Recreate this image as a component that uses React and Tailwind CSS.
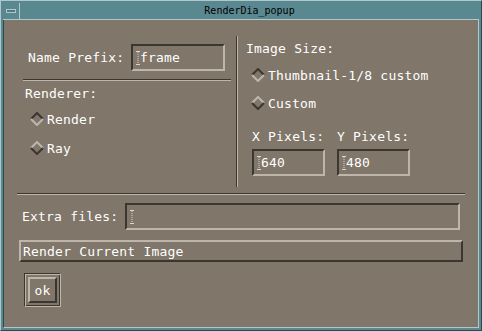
import React from 'react';

// Motif-style shadow colours
const DARK = '#3b3630';
const LIGHT = '#beb6ab';

// dotted I-beam text cursor drawn in every text field
const Ibeam = () => (
  <svg width="4" height="14" viewBox="0 0 4 14" className="shrink-0">
    <path d="M0 0.5h4M0 13.5h4" stroke="#dcd6cc" strokeWidth="1" />
    <path d="M2 1v12" stroke="#dcd6cc" strokeWidth="1" strokeDasharray="1 1" />
  </svg>
);

const TextField = ({ value, className }) => (
  <div
    className={
      'flex items-center pl-[3px] border-2 border-t-[#3b3630] border-l-[#3b3630] border-b-[#beb6ab] border-r-[#beb6ab] ' +
      className
    }
  >
    <Ibeam />
    <span className="leading-none">{value}</span>
  </div>
);

// diamond radio indicator: "on" is sunken (dark top), "off" is raised
const Diamond = ({ on }) => (
  <svg width="14" height="14" viewBox="0 0 14 14" className="shrink-0">
    <path d="M1 7L7 1L13 7" fill="none" stroke={on ? DARK : LIGHT} strokeWidth="2" />
    <path d="M1 7L7 13L13 7" fill="none" stroke={on ? LIGHT : DARK} strokeWidth="2" />
  </svg>
);

const Radio = ({ on, label, className }) => (
  <div className={'flex items-center h-[16px] ' + className}>
    <Diamond on={on} />
    <span className="ml-[3px] leading-none">{label}</span>
  </div>
);

export default function App() {
  return (
    <div className="w-[482px] h-[331px] flex flex-col bg-[#5a8890] border border-t-[#b0c8cc] border-l-[#b0c8cc] border-b-[#2b4a50] border-r-[#2b4a50] p-[2px] font-['DejaVu_Sans_Mono',monospace]">
      {/* Title bar */}
      <div className="h-[17px] flex border-b border-b-[#b0c8cc]">
        <div className="w-[17px] h-full border-r border-r-[#b0c8cc] flex items-center justify-center">
          <div className="w-[10px] h-[4px] border border-[#b0c8cc] bg-[#4d7c84]" />
        </div>
        <div className="flex-1 flex items-center justify-center text-[10px] text-black leading-none">
          RenderDia_popup
        </div>
      </div>

      {/* Dialog body */}
      <div className="flex-1 flex flex-col bg-[#807669] border-l border-r border-b border-l-[#2b4a50] border-r-[#b0c8cc] border-b-[#b0c8cc] text-white text-[13px] tracking-[0.2px]">
        <div className="flex h-[168px]">
          {/* Left column */}
          <div className="w-[232px] flex flex-col">
            <div className="flex items-center mt-[24px] pl-[24px]">
              <span className="w-[103px] leading-none">Name Prefix:</span>
              <TextField value="frame" className="w-[94px] h-[27px]" />
            </div>
            <div className="mt-[8px] ml-[19px] w-[208px] h-[2px] border-t border-b border-t-[#3b3630] border-b-[#beb6ab]" />
            <div className="mt-[4px] pl-[21px] h-[16px] flex items-center leading-none">Renderer:</div>
            <Radio on label="Render" className="mt-[10px] ml-[26px]" />
            <Radio label="Ray" className="mt-[13px] ml-[26px]" />
          </div>

          {/* Vertical separator */}
          <div className="w-[2px] mt-[16px] h-[151px] border-l border-r border-l-[#3b3630] border-r-[#beb6ab]" />

          {/* Right column */}
          <div className="flex-1 flex flex-col">
            <div className="mt-[20px] pl-[8px] h-[16px] flex items-center leading-none">Image Size:</div>
            <Radio on label="Thumbnail-1/8 custom" className="mt-[11px] ml-[13px]" />
            <Radio label="Custom" className="mt-[12px] ml-[13px]" />
            <div className="mt-[17px] pl-[14px] h-[16px] flex items-center leading-none">
              <span className="w-[85px]">X Pixels:</span>
              <span>Y Pixels:</span>
            </div>
            <div className="mt-[5px] pl-[14px] flex gap-[12px]">
              <TextField value="640" className="w-[73px] h-[27px]" />
              <TextField value="480" className="w-[73px] h-[27px]" />
            </div>
          </div>
        </div>

        {/* Bottom section */}
        <div className="mt-[5px] ml-[13px] w-[448px] h-[2px] border-t border-b border-t-[#3b3630] border-b-[#beb6ab]" />
        <div className="mt-[8px] pl-[18px] flex items-center">
          <span className="w-[103px] leading-none">Extra files:</span>
          <TextField value="" className="w-[335px] h-[27px]" />
        </div>
        <div className="mt-[10px] ml-[15px] w-[444px] h-[22px] flex items-center pl-[2px] border-2 border-t-[#beb6ab] border-l-[#beb6ab] border-b-[#3b3630] border-r-[#3b3630] leading-none">
          Render Current Image
        </div>
        <div className="mt-[11px] ml-[20px] w-[37px] h-[34px] p-[3px] border border-t-[#3b3630] border-l-[#3b3630] border-b-[#beb6ab] border-r-[#beb6ab] shadow-[inset_1px_1px_0_#beb6ab,inset_-1px_-1px_0_#3b3630]">
          <div className="w-[29px] h-[26px] flex items-center justify-center border-2 border-t-[#beb6ab] border-l-[#beb6ab] border-b-[#3b3630] border-r-[#3b3630] leading-none">
            ok
          </div>
        </div>
      </div>
    </div>
  );
}
